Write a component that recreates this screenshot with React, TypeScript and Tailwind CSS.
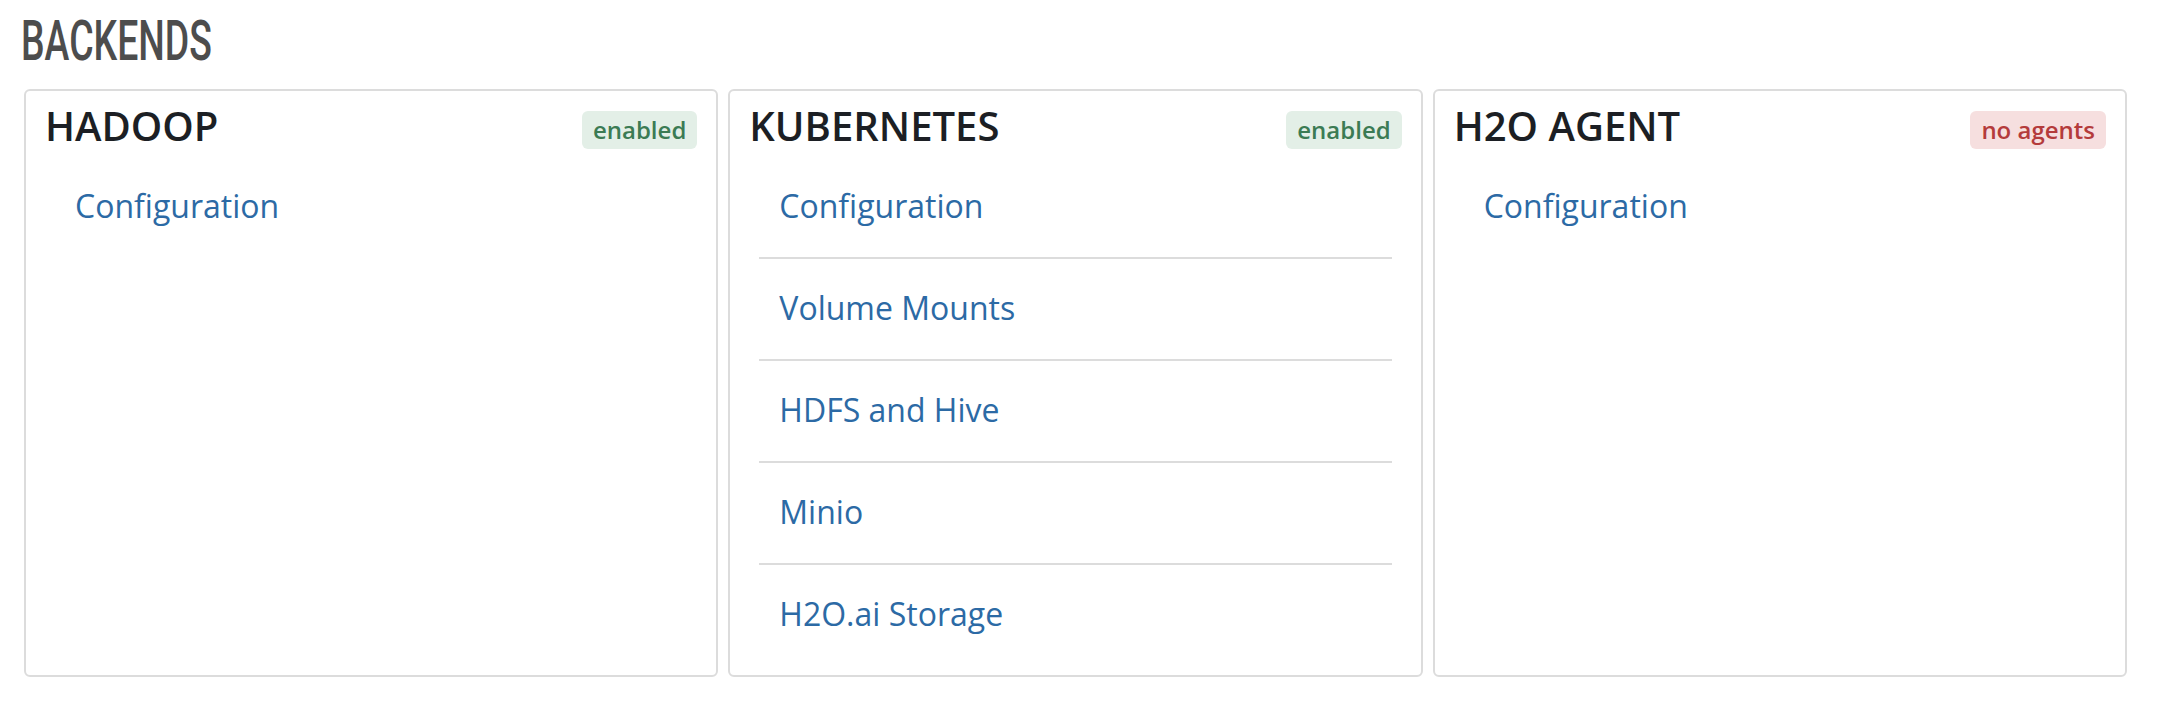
import React from 'react';

type Backend = {
  name: string;
  status: string;
  ok: boolean;
  links: string[];
};

const backends: Backend[] = [
  { name: 'HADOOP', status: 'enabled', ok: true, links: ['Configuration'] },
  {
    name: 'KUBERNETES',
    status: 'enabled',
    ok: true,
    links: ['Configuration', 'Volume Mounts', 'HDFS and Hive', 'Minio', 'H2O.ai Storage'],
  },
  { name: 'H2O AGENT', status: 'no agents', ok: false, links: ['Configuration'] },
];

const BackendCard: React.FC<{ item: Backend }> = ({ item }) => (
  <div className="flex flex-col rounded-[6px] border-2 border-[#dcdcdc] bg-white px-[19px] pt-[11px] pb-[10px]">
    <div className="flex h-[55px] items-start justify-between">
      <h3 className="text-[40px] leading-[48px] font-semibold text-[#1c1f24]">{item.name}</h3>
      <span
        className={
          item.ok
            ? 'mt-[9px] h-[38px] rounded-[6px] bg-[#e3efe7] px-[11px] text-[24px] leading-[38px] font-semibold text-[#3b7b54]'
            : 'mt-[9px] h-[38px] rounded-[6px] bg-[#f6dfdf] px-[11px] text-[24px] leading-[38px] font-semibold text-[#b43b3b]'
        }
      >
        {item.status}
      </span>
    </div>
    <ul className="mx-[10px]">
      {item.links.map((link, i) => (
        <li
          key={link}
          className={
            i === 0
              ? 'flex h-[100px] items-center px-[20px]'
              : 'flex h-[102px] items-center border-t-2 border-[#dcdcdc] px-[20px]'
          }
        >
          <a href="#" className="-mt-[2px] text-[32px] text-[#2c6aa5]">
            {link}
          </a>
        </li>
      ))}
    </ul>
  </div>
);

export default function App() {
  return (
    <div className="min-h-[716px] bg-white pt-[14px] pr-[31px] pl-[24px]" style={{ fontFamily: '"Open Sans", sans-serif' }}>
      <h2 className="-ml-[3px] h-[55px] text-[55px] leading-[55px] font-medium text-[#4d4d4d]" style={{ fontFamily: 'Roboto, sans-serif' }}>
        <span className="inline-block origin-left scale-x-[0.68]">BACKENDS</span>
      </h2>
      <div className="mt-[20px] grid grid-cols-3 gap-[10px]">
        {backends.map((b) => (
          <BackendCard key={b.name} item={b} />
        ))}
      </div>
    </div>
  );
}
